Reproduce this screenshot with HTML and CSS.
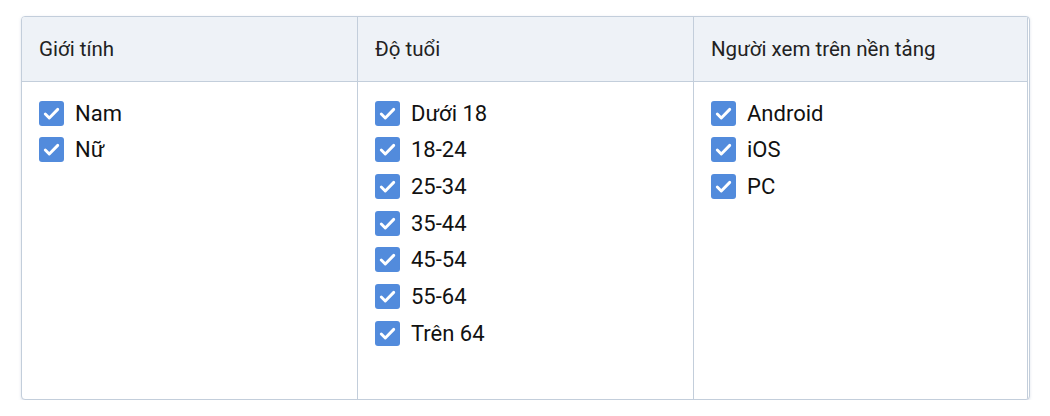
FILE: index.html
```html
<!DOCTYPE html>
<html lang="vi">
<head>
<meta charset="utf-8">
<link rel="stylesheet" href="styles.css">
</head>
<body>
<div class="card">
  <div class="col">
    <div class="head">Giới tính</div>
    <div class="body">
      <label class="row"><span class="cb"><svg viewBox="0 0 24 24"><path d="M5.5 12.5l4.2 4.2 8.8-9"/></svg></span>Nam</label>
      <label class="row"><span class="cb"><svg viewBox="0 0 24 24"><path d="M5.5 12.5l4.2 4.2 8.8-9"/></svg></span>Nữ</label>
    </div>
  </div>
  <div class="col">
    <div class="head">Độ tuổi</div>
    <div class="body">
      <label class="row"><span class="cb"><svg viewBox="0 0 24 24"><path d="M5.5 12.5l4.2 4.2 8.8-9"/></svg></span>Dưới 18</label>
      <label class="row"><span class="cb"><svg viewBox="0 0 24 24"><path d="M5.5 12.5l4.2 4.2 8.8-9"/></svg></span>18-24</label>
      <label class="row"><span class="cb"><svg viewBox="0 0 24 24"><path d="M5.5 12.5l4.2 4.2 8.8-9"/></svg></span>25-34</label>
      <label class="row"><span class="cb"><svg viewBox="0 0 24 24"><path d="M5.5 12.5l4.2 4.2 8.8-9"/></svg></span>35-44</label>
      <label class="row"><span class="cb"><svg viewBox="0 0 24 24"><path d="M5.5 12.5l4.2 4.2 8.8-9"/></svg></span>45-54</label>
      <label class="row"><span class="cb"><svg viewBox="0 0 24 24"><path d="M5.5 12.5l4.2 4.2 8.8-9"/></svg></span>55-64</label>
      <label class="row"><span class="cb"><svg viewBox="0 0 24 24"><path d="M5.5 12.5l4.2 4.2 8.8-9"/></svg></span>Trên 64</label>
    </div>
  </div>
  <div class="col">
    <div class="head">Người xem trên nền tảng</div>
    <div class="body">
      <label class="row"><span class="cb"><svg viewBox="0 0 24 24"><path d="M5.5 12.5l4.2 4.2 8.8-9"/></svg></span>Android</label>
      <label class="row"><span class="cb"><svg viewBox="0 0 24 24"><path d="M5.5 12.5l4.2 4.2 8.8-9"/></svg></span>iOS</label>
      <label class="row"><span class="cb"><svg viewBox="0 0 24 24"><path d="M5.5 12.5l4.2 4.2 8.8-9"/></svg></span>PC</label>
    </div>
  </div>
</div>
</body>
</html>
```

FILE: styles.css
```css
* { box-sizing: border-box; }
html, body { margin: 0; padding: 0; background: #fff; }
body {
  font-family: Roboto, "Liberation Sans", sans-serif;
  color: #1a1a1a;
  padding: 16px 0 0 21px;
}
.card {
  width: 1009px;
  height: 384px;
  display: grid;
  grid-template-columns: 336px 336px 1fr;
  border: 1px solid #c3cedb;
  border-radius: 4px;
  box-shadow: 0 1px 3px rgba(120, 140, 170, 0.25);
  overflow: hidden;
  background: #fff;
}
.col {
  display: flex;
  flex-direction: column;
  border-right: 1px solid #c3cedb;
}
.col:last-child { border-right: 1px solid #c3cedb; margin-right: 1px; }
.head {
  height: 65px;
  background: #eef2f7;
  border-bottom: 1px solid #c3cedb;
  display: flex;
  align-items: center;
  padding: 0 17px;
  font-size: 20.5px;
  color: #222;
}
.body {
  padding: 13px 17px 0 17px;
  display: flex;
  flex-direction: column;
}
.row {
  display: flex;
  align-items: center;
  height: 36.67px;
  font-size: 22px;
  color: #111;
}
.cb {
  width: 25px;
  height: 25px;
  border-radius: 3px;
  background: #528bdc;
  margin-right: 11px;
  display: flex;
  align-items: center;
  justify-content: center;
}
.cb svg {
  width: 23px;
  height: 23px;
  fill: none;
  stroke: #fff;
  stroke-width: 3;
  stroke-linecap: round;
  stroke-linejoin: round;
}
```
